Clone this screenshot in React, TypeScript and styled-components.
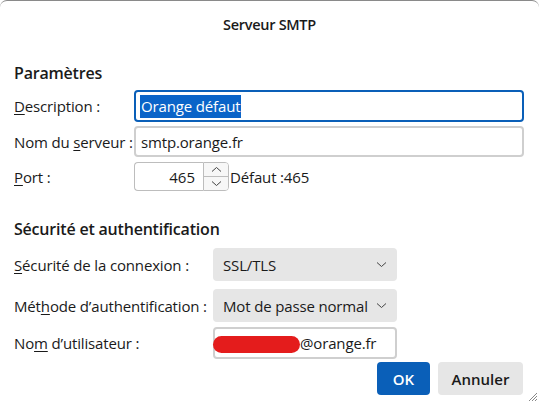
import React from "react";
import styled, { createGlobalStyle } from "styled-components";

const Global = createGlobalStyle`
  html, body { margin: 0; padding: 0; background: #ffffff; }
  body { font-family: "Open Sans", "Noto Sans", sans-serif; color: #1a1a1a; }
  * { box-sizing: border-box; }
`;

const Window = styled.div`
  width: 539px;
  height: 403px;
  border-top: 1px solid #8a8a8a;
  border-radius: 7px 7px 0 0;
  background: #fff;
  position: relative;
  overflow: hidden;
`;

const Title = styled.div`
  height: 45px;
  display: flex;
  align-items: center;
  justify-content: center;
  font-size: 14.5px;
  font-weight: 600;
  letter-spacing: -0.3px;
  padding-top: 1px;
`;

const Body = styled.div`
  padding: 0 15px 0 14px;
  display: flex;
  flex-direction: column;
`;

const Heading = styled.div<{ $top: number }>`
  font-size: 16px;
  font-weight: 600;
  margin-top: ${(p) => p.$top}px;
  height: 24px;
  display: flex;
  align-items: center;
  letter-spacing: -0.2px;
`;

const Grid = styled.div<{ $label: number; $top: number }>`
  display: grid;
  grid-template-columns: ${(p) => p.$label}px 1fr;
  align-items: center;
  margin-top: ${(p) => p.$top}px;
`;

const Label = styled.div<{ $h: number; $gap?: number }>`
  font-size: 15px;
  height: ${(p) => p.$h}px;
  margin-bottom: ${(p) => p.$gap ?? 0}px;
  display: flex;
  align-items: center;
  letter-spacing: -0.15px;
  white-space: nowrap;
  u { text-decoration-thickness: 1px; text-underline-offset: 2px; }
`;

const TextField = styled.div<{ $h: number; $focused?: boolean; $width?: number; $gap?: number }>`
  height: ${(p) => p.$h}px;
  margin-bottom: ${(p) => p.$gap ?? 0}px;
  width: ${(p) => (p.$width ? `${p.$width}px` : "100%")};
  border: ${(p) => (p.$focused ? "2px solid #0a5fb8" : "2px solid #cfcfcf")};
  border-radius: 4px;
  display: flex;
  align-items: center;
  padding-left: ${(p) => (p.$focused ? 4 : 5)}px;
  font-size: 15px;
  letter-spacing: -0.15px;
  position: relative;
  background: #fff;
`;

const Selected = styled.span`
  background: #0a64c8;
  color: #fff;
  padding: 1px 1px 2px 1px;
  line-height: 20px;
`;

const PortRow = styled.div`
  display: flex;
  align-items: center;
  height: 29px;
`;

const PortBox = styled.div`
  width: 69px;
  height: 29px;
  border: 1px solid #bdbdbd;
  border-right: none;
  border-radius: 4px 0 0 4px;
  display: flex;
  align-items: center;
  justify-content: flex-end;
  padding-right: 8px;
  font-size: 15px;
`;

const Spinner = styled.div`
  width: 26px;
  height: 29px;
  display: flex;
  flex-direction: column;
  border: 1px solid #bdbdbd;
  border-radius: 0 4px 4px 0;
  overflow: hidden;
`;

const SpinBtn = styled.div<{ $bottom?: boolean }>`
  flex: 1;
  display: flex;
  align-items: center;
  justify-content: center;
  background: #f7f7f7;
  border-top: ${(p) => (p.$bottom ? "1px solid #bdbdbd" : "none")};
`;

const Hint = styled.span`
  font-size: 15px;
  margin-left: 1px;
  letter-spacing: -0.15px;
`;

const Select = styled.div<{ $gap?: number }>`
  width: 184px;
  height: 33px;
  margin-bottom: ${(p) => p.$gap ?? 0}px;
  background: #e6e6e6;
  border-radius: 4px;
  display: flex;
  align-items: center;
  justify-content: space-between;
  padding: 0 10px 0 10px;
  font-size: 15px;
  letter-spacing: -0.15px;
`;

const Redact = styled.span`
  position: absolute;
  left: -2px;
  top: 7px;
  width: 87px;
  height: 17px;
  background: #e41c1c;
  border-radius: 9px;
`;

const UserText = styled.span`
  margin-left: 80px;
`;

const Buttons = styled.div`
  display: flex;
  justify-content: flex-end;
  gap: 8px;
  margin-top: 3px;
  padding-right: 1px;
`;

const Button = styled.button<{ $primary?: boolean }>`
  height: 33px;
  padding: 0;
  width: ${(p) => (p.$primary ? 53 : 85)}px;
  border: none;
  border-radius: 4px;
  font-family: inherit;
  font-size: 15px;
  font-weight: 600;
  background: ${(p) => (p.$primary ? "#0a5fb8" : "#e6e6e6")};
  color: ${(p) => (p.$primary ? "#ffffff" : "#1a1a1a")};
`;

const Grip = styled.svg`
  position: absolute;
  right: 1px;
  bottom: 1px;
`;

const Chevron = ({ up, size = 11 }: { up?: boolean; size?: number }) => (
  <svg width={size} height="7" viewBox="0 0 11 7">
    <path
      d={up ? "M1 5.5 L5.5 1.5 L10 5.5" : "M1 1.5 L5.5 5.5 L10 1.5"}
      fill="none"
      stroke="#444"
      strokeWidth="1"
    />
  </svg>
);

export default function App() {
  return (
    <>
      <Global />
      <Window>
        <Title>Serveur SMTP</Title>
        <Body>
          <Heading $top={15}>Paramètres</Heading>
          <Grid $label={120} $top={5}>
            <Label $h={32} $gap={4}>
              <span><u>D</u>escription :</span>
            </Label>
            <TextField $h={32} $focused $gap={4}>
              <Selected>Orange défaut</Selected>
            </TextField>
            <Label $h={31} $gap={5}>
              <span>Nom du <u>s</u>erveur :</span>
            </Label>
            <TextField $h={31} $gap={5}>smtp.orange.fr</TextField>
            <Label $h={29}>
              <span><u>P</u>ort :</span>
            </Label>
            <PortRow>
              <PortBox>465</PortBox>
              <Spinner>
                <SpinBtn><Chevron up /></SpinBtn>
                <SpinBtn $bottom><Chevron /></SpinBtn>
              </Spinner>
              <Hint>Défaut :465</Hint>
            </PortRow>
          </Grid>
          <Heading $top={26}>Sécurité et authentification</Heading>
          <Grid $label={199} $top={7}>
            <Label $h={33} $gap={8}>
              <span><u>S</u>écurité de la connexion :</span>
            </Label>
            <Select $gap={8}>
              <span>SSL/TLS</span>
              <Chevron />
            </Select>
            <Label $h={33} $gap={5}>
              <span>Mét<u>h</u>ode d’authentification :</span>
            </Label>
            <Select $gap={5}>
              <span>Mot de passe normal</span>
              <Chevron />
            </Select>
            <Label $h={32}>
              <span>No<u>m</u> d’utilisateur :</span>
            </Label>
            <TextField $h={32} $width={184}>
              <Redact />
              <UserText>@orange.fr</UserText>
            </TextField>
          </Grid>
          <Buttons>
            <Button $primary>OK</Button>
            <Button>Annuler</Button>
          </Buttons>
        </Body>
        <Grip width="12" height="12" viewBox="0 0 12 12">
          <path d="M11 3 L3 11 M11 6 L6 11 M11 9 L9 11" stroke="#888" strokeWidth="1" />
        </Grip>
      </Window>
    </>
  );
}
